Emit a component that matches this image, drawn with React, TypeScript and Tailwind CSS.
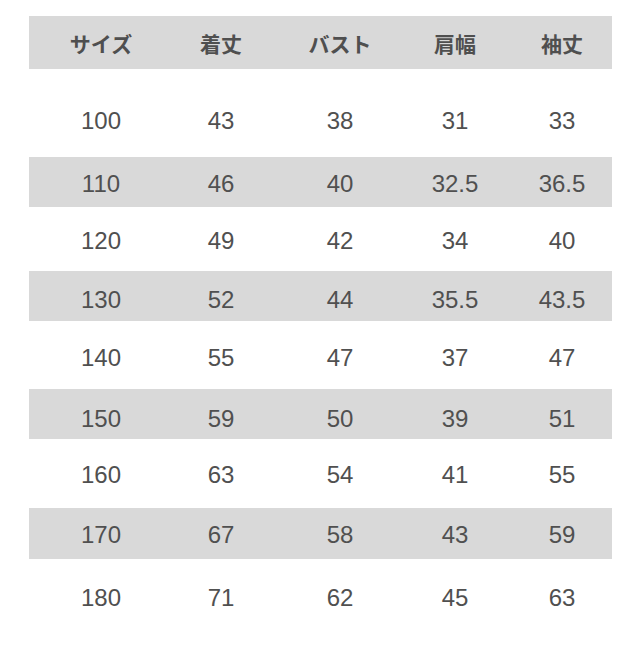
import React from "react";

const headers = ["サイズ", "着丈", "バスト", "肩幅", "袖丈"];

const rows: { v: string[]; band: boolean; h: string; pt: string }[] = [
  { v: ["100", "43", "38", "31", "33"], band: false, h: "h-[88px]", pt: "pt-[38px]" },
  { v: ["110", "46", "40", "32.5", "36.5"], band: true, h: "h-[50px]", pt: "pt-[13px]" },
  { v: ["120", "49", "42", "34", "40"], band: false, h: "h-[64px]", pt: "pt-[20px]" },
  { v: ["130", "52", "44", "35.5", "43.5"], band: true, h: "h-[50px]", pt: "pt-[15px]" },
  { v: ["140", "55", "47", "37", "47"], band: false, h: "h-[68px]", pt: "pt-[23px]" },
  { v: ["150", "59", "50", "39", "51"], band: true, h: "h-[50px]", pt: "pt-[16px]" },
  { v: ["160", "63", "54", "41", "55"], band: false, h: "h-[69px]", pt: "pt-[22px]" },
  { v: ["170", "67", "58", "43", "59"], band: true, h: "h-[51px]", pt: "pt-[13px]" },
  { v: ["180", "71", "62", "45", "63"], band: false, h: "h-[92px]", pt: "pt-[25px]" },
];

const colCls = ["ml-0", "ml-[40px]", "ml-[39px]", "ml-[35px]", "ml-[27px]"];

export default function App() {
  return (
    <div className="w-[640px] h-[651px] bg-white pt-[16px] px-[29px] pr-[28px]">
      <div
        className="flex items-center h-[53px] bg-[#d9d9d9] pl-[32px] text-[#4f4f4f] text-[21px] font-bold"
        style={{ fontFamily: '"Noto Sans CJK JP", "Noto Sans", sans-serif' }}
      >
        {headers.map((h, i) => (
          <div key={i} className={`w-[80px] text-center leading-[28px] ${colCls[i]}`}>
            {h}
          </div>
        ))}
      </div>
      {rows.map((r, ri) => (
        <div
          key={ri}
          className={`flex items-start pl-[32px] ${r.h} ${r.pt} ${r.band ? "bg-[#d9d9d9]" : "bg-white"} text-[#505050] text-[24px]`}
          style={{ fontFamily: '"Liberation Sans", Arial, sans-serif' }}
        >
          {r.v.map((v, i) => (
            <div key={i} className={`w-[80px] text-center leading-[28px] ${colCls[i]}`}>
              {v}
            </div>
          ))}
        </div>
      ))}
    </div>
  );
}
